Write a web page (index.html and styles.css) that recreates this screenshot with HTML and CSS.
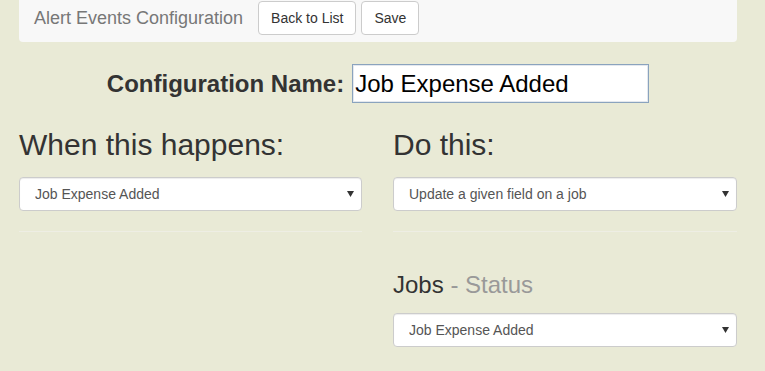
FILE: index.html
```html
<!DOCTYPE html>
<html lang="en">
<head>
    <meta charset="UTF-8">
    <meta name="viewport" content="width=device-width, initial-scale=1.0">
    <title>Alert Events Configuration</title>
    <link rel="stylesheet" href="styles.css">
</head>
<body>

    <div class="topbar">
        <span class="brand">Alert Events Configuration</span>
        <button class="btn">Back to List</button>
        <button class="btn">Save</button>
    </div>

    <div class="name-row">
        <label for="configName">Configuration Name:</label>
        <input type="text" id="configName" value="Job Expense Added">
    </div>

    <div class="columns">
        <div class="col">
            <h2>When this happens:</h2>
            <div class="select-wrap">
                <select>
                    <option>Job Expense Added</option>
                </select>
                <svg class="arrow" width="7" height="6" viewBox="0 0 7 6"><polygon points="0,0 7,0 3.5,6" fill="#333"/></svg>
            </div>
            <hr>
        </div>

        <div class="col">
            <h2>Do this:</h2>
            <div class="select-wrap">
                <select>
                    <option>Update a given field on a job</option>
                </select>
                <svg class="arrow" width="7" height="6" viewBox="0 0 7 6"><polygon points="0,0 7,0 3.5,6" fill="#333"/></svg>
            </div>
            <hr>

            <h3>Jobs <span class="muted">- Status</span></h3>
            <div class="select-wrap">
                <select>
                    <option>Job Expense Added</option>
                </select>
                <svg class="arrow" width="7" height="6" viewBox="0 0 7 6"><polygon points="0,0 7,0 3.5,6" fill="#333"/></svg>
            </div>
        </div>
    </div>

</body>
</html>
```

FILE: styles.css
```css
body {
    margin: 0;
    background-color: #e9ead6;
    color: #333;
    font-family: "Liberation Sans", Arial, sans-serif;
    font-size: 14px;
}

.topbar {
    display: flex;
    align-items: center;
    margin: 0 28px 0 19px;
    padding: 1px 0 7px 15px;
    background-color: #f8f8f8;
    border-radius: 0 0 4px 4px;
}

.brand {
    font-size: 18px;
    color: #777;
    line-height: 34px;
    margin-right: 15px;
}

.btn {
    height: 34px;
    padding: 6px 12px;
    margin-right: 5px;
    font-family: inherit;
    font-size: 14px;
    color: #333;
    background-color: #fff;
    border: 1px solid #ccc;
    border-radius: 4px;
    cursor: pointer;
}

.name-row {
    display: flex;
    justify-content: center;
    align-items: center;
    margin: 22px 28px 0 19px;
}

.name-row label {
    font-size: 24px;
    font-weight: bold;
    margin-right: 8px;
}

.name-row input {
    width: 297px;
    height: 39px;
    box-sizing: border-box;
    padding: 0 2px;
    font-family: inherit;
    font-size: 24px;
    color: #000;
    background: #fff;
    border: 1px solid #8aa3be;
    box-shadow: inset 0 0 0 1px #e4e8ee;
}

.columns {
    display: grid;
    grid-template-columns: 343px 344px;
    column-gap: 31px;
    margin: 0 28px 0 19px;
}

h2 {
    font-size: 30px;
    font-weight: normal;
    line-height: 33px;
    margin: 25px 0 16px;
}

h3 {
    font-size: 24px;
    font-weight: normal;
    line-height: 26px;
    margin: 40px 0 15px;
}

.muted {
    color: #999;
}

.select-wrap {
    position: relative;
}

.select-wrap select {
    display: block;
    width: 100%;
    height: 34px;
    padding: 0 24px 0 15px;
    font-family: inherit;
    font-size: 14px;
    color: #555;
    background-color: #fff;
    border: 1px solid #ccc;
    border-radius: 4px;
    box-shadow: inset 0 1px 1px rgba(0, 0, 0, 0.075);
    -webkit-appearance: none;
    appearance: none;
}

.arrow {
    position: absolute;
    right: 8px;
    top: 14px;
    pointer-events: none;
}

hr {
    margin: 20px 0 0;
    border: 0;
    border-top: 1px solid #eeeee4;
}
```
